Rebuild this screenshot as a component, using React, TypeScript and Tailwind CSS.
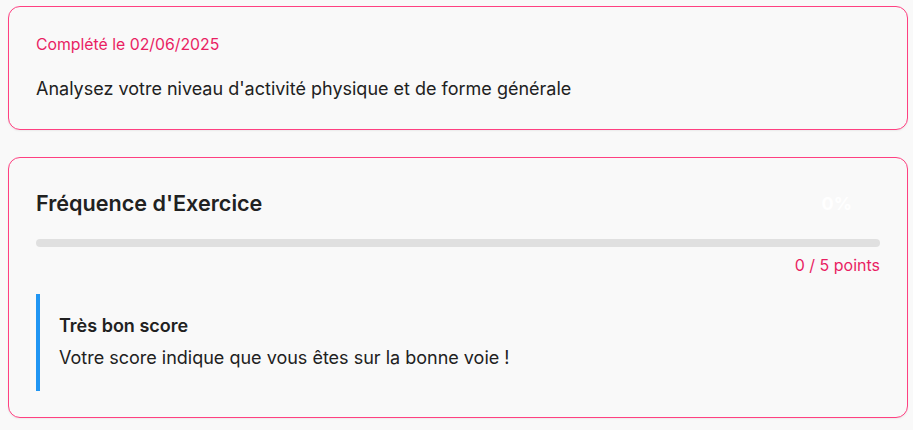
import React from "react";

type ScoreCardProps = {
    title: string;
    score: number;
    max: number;
};

function ScoreCard({ title, score, max }: ScoreCardProps) {
    const pct = Math.round((score / max) * 100);
    return (
        <div className="rounded-xl border border-[#ff4081] bg-[#f9f9f9] px-[27px] pt-[29px] pb-[26px] shadow-[0_1px_2px_rgba(0,0,0,0.06)]">
            <div className="flex items-center justify-between">
                <h2 className="text-[21.6px] leading-[33px] font-semibold text-[#212121]">{title}</h2>
                <span className="mr-[28px] text-[18px] font-bold text-white">{pct}%</span>
            </div>
            <div className="mt-[19px] h-2 w-full rounded-full bg-[#e0e0e0]">
                <div className="h-2 rounded-full bg-[#e91e63]" style={{ width: `${pct}%` }} />
            </div>
            <p className="mt-[6px] text-right text-[16px] leading-6 text-[#e91e63]">
                {score} / {max} points
            </p>
            <div className="mt-[17px] border-l-4 border-[#2196f3] pl-[19px] pt-[18px] pb-[20px]">
                <h3 className="text-[18px] leading-[27px] font-semibold text-[#212121]">Très bon score</h3>
                <p className="mt-[5px] text-[18px] leading-[27px] text-[#212121]">
                    Votre score indique que vous êtes sur la bonne voie !
                </p>
            </div>
        </div>
    );
}

export default function App() {
    return (
        <div
            className="min-h-[430px] bg-[#f9f9f9] px-2 pt-[6px] pr-[5px]"
            style={{ fontFamily: "Inter, 'Noto Sans', sans-serif" }}
        >
            <div className="flex flex-col gap-[27px]">
                <div className="rounded-xl border border-[#ff4081] bg-[#f9f9f9] px-[27px] pt-[26px] pb-[27px] shadow-[0_1px_2px_rgba(0,0,0,0.06)]">
                    <p className="text-[15.8px] leading-6 text-[#e91e63]">Complété le 02/06/2025</p>
                    <p className="mt-[18px] text-[18px] leading-[27px] text-[#212121]">
                        Analysez votre niveau d'activité physique et de forme générale
                    </p>
                </div>
                <ScoreCard title="Fréquence d'Exercice" score={0} max={5} />
            </div>
        </div>
    );
}
